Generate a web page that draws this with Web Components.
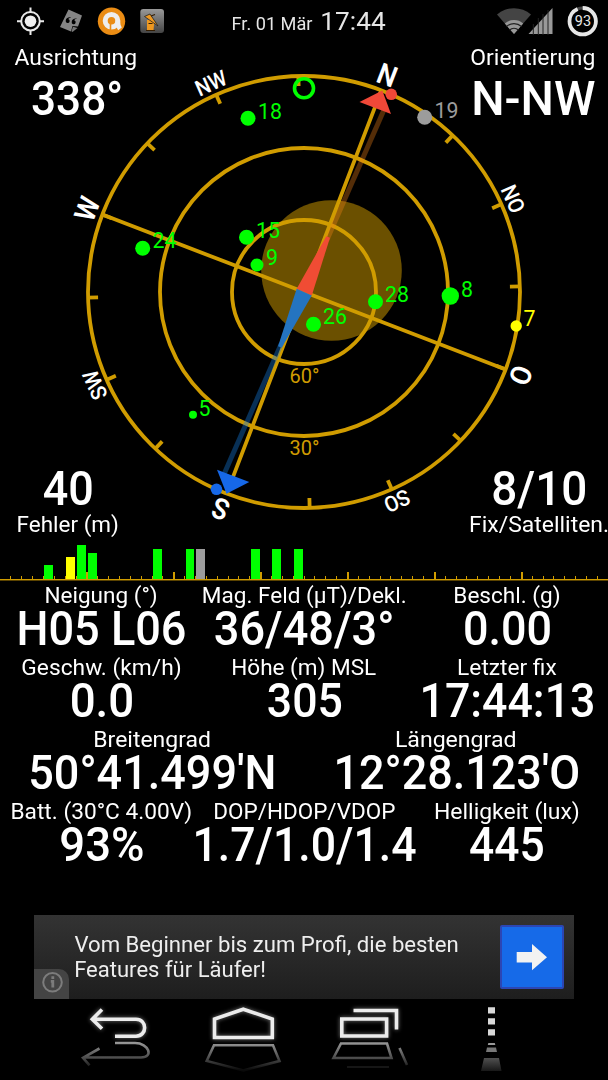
<!DOCTYPE html>
<html lang="de">
<head>
<meta charset="utf-8">
<title>GPS Status</title>
<style>
  body {
    margin: 0;
    background: #000;
    color: #fff;
    font-family: Roboto, "Noto Sans", sans-serif;
    overflow: hidden;
  }
</style>
</head>
<body>
<gps-screen></gps-screen>

<script>
const define = (name, html, setup) => {
  const template = document.createElement('template');
  template.innerHTML = html;
  customElements.define(name, class extends HTMLElement {
    constructor() {
      super();
      this.attachShadow({ mode: 'open' });
      this.shadowRoot.appendChild(template.content.cloneNode(true));
    }
    connectedCallback() {
      if (setup) setup(this, this.shadowRoot);
    }
  });
};

// Text condensed or widened so that its ink is as wide as the width attribute
define('fit-text', `
  <style>
    :host { display: inline-block; white-space: nowrap; }
  </style>
  <slot></slot>
`, (host) => {
  const target = Number(host.getAttribute('width'));
  if (!target) return;
  const style = getComputedStyle(host);
  const ctx = document.createElement('canvas').getContext('2d');
  ctx.font = `${style.fontWeight} ${style.fontSize} Roboto`;
  const box = ctx.measureText(host.textContent);
  const scale = target / (box.actualBoundingBoxRight + box.actualBoundingBoxLeft);
  host.style.transform = `scaleX(${scale})`;
  // keep the layout box in step with the drawn width
  host.style.marginLeft = host.style.marginRight = box.width * (scale - 1) / 2 + 'px';
});

define('status-bar', `
  <style>
    :host { display: flex; align-items: flex-start; height: 42px; color: #e6e6e6; }
    svg { display: block; }
    .clock { display: flex; align-items: baseline; gap: 7px; margin-left: 62px; line-height: 42px; }
    .date { font-size: 17.5px; }
    .time { font-size: 26.5px; }
    .right { margin-left: auto; }
  </style>
  <svg width="170" height="42" viewBox="0 0 170 42">
    <defs>
      <linearGradient id="tile" x2="0" y2="1"><stop stop-color="#999"/><stop offset="1" stop-color="#444"/></linearGradient>
    </defs>
    <g stroke="#e8e8e8" stroke-width="2" fill="none">
      <circle cx="30.5" cy="21.2" r="9.3"/>
      <path d="M30.5 7.5v4.5M30.5 30.5v4.5M17 21.2h4.5M39.5 21.2H44"/>
    </g>
    <circle cx="30.5" cy="21.2" r="5.8" fill="#eee"/>
    <path d="M68.5 9.5 82 15.5 78 26.5l-5.500-.5-1.500 5.500-11-4.500z" fill="#858585"/>
    <path d="m77.500 28-5 4-1-.7 1.500-4.500z" fill="#777"/>
    <path d="M70.700 17.300c-3-.3-5 1.200-5 3.400a2 2 0 1 0 2.600-1.600c.2-.8 1-1.200 2.100-1.200zM76.700 18.500c-3-.3-5 1.200-5 3.400a2 2 0 1 0 2.600-1.600c.2-.8 1-1.200 2.100-1.200z" fill="#000"/>
    <circle cx="111.500" cy="21.200" r="13.700" fill="#ea8c14"/>
    <circle cx="111.500" cy="20.800" r="6.300" fill="none" stroke="#eee" stroke-width="5"/>
    <path d="M117.800 20.500c0 4 .4 6 2.200 8.300" stroke="#eee" stroke-width="4.600" fill="none"/>
    <path d="M110.500 30v-6" stroke="#ea8c14" stroke-width="1.600"/>
    <rect x="140.300" y="9" width="23.700" height="24" rx="3" fill="url(#tile)"/>
    <path d="M147 20h7.500l-1 10h-6.500z" fill="#ee9820"/>
    <path d="M144.500 16.500 150 14l8 12z" fill="#ee9820" stroke="#222" stroke-width=".8"/>
    <path d="M146 30.500h9M148.500 23.500h4M151 16l4-1.500" stroke="#331c00" stroke-width="1.200"/>
  </svg>
  <div class="clock">
    <fit-text class="date" width="80">Fr. 01 Mär</fit-text>
    <fit-text class="time" width="63.500">17:44</fit-text>
  </div>
  <svg class="right" width="120" height="42" viewBox="488 0 120 42">
    <path d="M514 34 497 14.500a26 26 0 0 1 34 0z" fill="#444"/>
    <path d="M514 34 504.800 23.500a14 14 0 0 1 18.400 0z" fill="#999"/>
    <path d="M506.500 26.500a11 11 0 0 1 15 0M509.500 30a7 7 0 0 1 9 0" stroke="#222" stroke-width="1.200" fill="none"/>
    <path d="M528.500 34 552.500 8v26z" fill="#999"/>
    <path d="M533.300 24v11M538.300 18v17M543 14v21M548 10v25" stroke="#222" stroke-width="1"/>
    <circle cx="582.700" cy="21.200" r="13.200" fill="none" stroke="#444" stroke-width="3"/>
    <circle cx="582.700" cy="21.200" r="13.200" fill="none" stroke="#e6e6e6" stroke-width="3.800" stroke-dasharray="77.200 83" transform="rotate(-90 582.700 21.200)"/>
    <text x="582.900" y="26" font-size="14.500" fill="#e6e6e6" text-anchor="middle">93</text>
  </svg>
`);

// One reading: a small caption and a large value, "flip" puts the value first
define('data-reading', `
  <style>
    :host { display: flex; flex-direction: column; align-items: center; }
    :host([flip]) { flex-direction: column-reverse; }
    .caption { font-size: 22.3px; line-height: 22px; }
    .value { font-size: 48px; line-height: 44px; font-weight: 500; padding: 1px 0 0 1px; }
    :host([loose]) .value { margin-top: 8.4px; }
    :host([flip]) .value { margin-bottom: 6px; line-height: 36px; }
  </style>
  <fit-text class="caption"></fit-text>
  <fit-text class="value"></fit-text>
`, (host, root) => {
  for (const part of ['caption', 'value']) {
    const old = root.querySelector('.' + part);
    const [text, width] = host.getAttribute(part).split('|');
    const el = old.cloneNode();
    el.textContent = text;
    if (width) el.setAttribute('width', width);
    old.replaceWith(el);
  }
});

const CX = 304, CY = 292;
const GOLD = '#d09c00';
const GREEN = '#00ff00';

// prn, x, y, dot radius, label x, label baseline, colour
const SATELLITES = [
  [18, 248, 118.300, 7.500, 258, 119, GREEN],
  [15, 246.500, 237.300, 7.500, 256, 237.500, GREEN],
  [24, 142.700, 248.300, 7.500, 152.500, 248.300, GREEN],
  [9, 257, 265, 6.500, 266, 265, GREEN],
  [26, 313.500, 324.300, 7.500, 323, 324, GREEN],
  [28, 375.500, 301.700, 7.500, 385, 301.700, GREEN],
  [8, 450.300, 296, 8.700, 461, 296.500, GREEN],
  [7, 516.200, 326, 5.700, 523.500, 325.700, '#ffff00'],
  [5, 193, 414.700, 4, 198.500, 415.500, GREEN],
  [19, 424.700, 117.300, 7.500, 434.500, 117.800, '#9c9c9c'],
];

define('sky-compass', `
  <style>
    :host { display: block; }
    svg { display: block; }
  </style>
  <svg width="608" height="490" viewBox="0 42 608 490"></svg>
`, (host, root) => {
  const heading = 21;
  const magnetic = 23.7;
  let s = `<circle cx="331.500" cy="270.500" r="70.300" fill="#6b5000"/>`;
  for (const r of [72, 144, 216]) {
    s += `<circle cx="${CX}" cy="${CY}" r="${r}" fill="none" stroke="${GOLD}" stroke-width="3.800"/>`;
  }
  for (let i = 0; i < 16; i++) {
    s += `<path d="M${CX} 75v11" stroke="${GOLD}" stroke-width="3.800" transform="rotate(${heading + i * 22.5} ${CX} ${CY})"/>`;
  }
  s += `<path d="M${CX} 76v432M88 ${CY}h432" stroke="${GOLD}" stroke-width="3.800" transform="rotate(${heading} ${CX} ${CY})"/>`;
  ['N', 'NO', 'O', 'SO', 'S', 'SW', 'W', 'NW'].forEach((name, i) => {
    const minor = i % 2;
    // condensed to match the narrow lettering of the readings
    s += `<text fill="#fff" font-size="${minor ? 22 : 29}" font-weight="${minor ? 500 : 600}" text-anchor="middle" transform="rotate(${heading + i * 45} ${CX} ${CY}) translate(${CX} ${minor ? 71 : 70}) scale(.92 1)">${name}</text>`;
  });
  // Magnetic needle
  s += `<g transform="rotate(${magnetic} ${CX} ${CY})">
    <path d="M301.500 94h5v142h-5z" fill="#f08018" fill-opacity=".35"/>
    <path d="M301.500 348h5v142h-5z" fill="#1478d8" fill-opacity=".4"/>
    <path d="M296 292h16.500l-6.500 -60h-4z" fill="#f04c34"/>
    <path d="M296 292h16.500l-6.500 60h-4z" fill="#2474c0"/>
  </g>`;
  s += `<circle cx="391.200" cy="94.300" r="5.800" fill="#f04838"/>
    <path d="M359.500 102 382.300 90.500 391 114z" fill="#f04838"/>
    <circle cx="216.500" cy="489.300" r="5.800" fill="#1668e8"/>
    <path d="M217 469.700 249.300 482 226.500 493.700z" fill="#1668e8"/>
    <g fill="${GOLD}" font-size="20" text-anchor="middle"><text x="304.500" y="383">60°</text><text x="304.500" y="455">30°</text></g>
    <circle cx="304" cy="88.200" r="9.500" fill="none" stroke="${GREEN}" stroke-width="3.600"/>`;
  for (const [prn, x, y, r, tx, ty, colour] of SATELLITES) {
    s += `<circle cx="${x}" cy="${y}" r="${r}" fill="${colour}"/>
      <text x="${tx}" y="${ty}" font-size="21.300" fill="${colour}">${prn}</text>`;
  }
  root.querySelector('svg').innerHTML = s;
});

// left edge, width, top, colour
const BARS = [
  [44, 9, 564.500, GREEN], [66, 9, 557, '#ffff00'], [77, 9, 545, GREEN], [88, 9, 552.700, GREEN],
  [153, 9, 549, GREEN], [186, 8.300, 549, GREEN], [196, 9, 549, '#9c9c9c'],
  [251, 9, 549, GREEN], [272, 9, 549, GREEN], [294, 9, 549, GREEN],
];

define('signal-strip', `
  <style>
    :host { display: block; }
    svg { display: block; }
  </style>
  <svg width="608" height="41" viewBox="0 540 608 41" shape-rendering="crispEdges"></svg>
`, (host, root) => {
  let s = '';
  for (let i = 1; i < 56; i++) {
    const major = i % 8 === 0;
    const h = major ? 7 : 3;
    s += `<rect x="${Math.floor(i * 10.86)}" y="${579 - h}" width="${major ? 2 : 1}" height="${h}" fill="#d09c00"/>`;
  }
  s += '<rect y="579" width="608" height="1" fill="#d09c00"/><rect y="580" width="608" height="1" fill="#5c4400"/>';
  for (const [x, w, y, colour] of BARS) {
    s += `<rect x="${x}" y="${y}" width="${w}" height="${579 - y}" fill="${colour}"/>`;
  }
  root.querySelector('svg').innerHTML = s;
});

define('ad-banner', `
  <style>
    :host {
      display: flex;
      align-items: center;
      position: relative;
      box-sizing: border-box;
      width: 540px;
      height: 84px;
      padding: 0 10px 0 40px;
      background: linear-gradient(#333, #1e1e1e);
      color: #eee;
    }
    .text { display: flex; flex-direction: column; align-items: flex-start; font-size: 22.3px; line-height: 25.3px; flex: 1; }
    .go {
      display: block;
      box-sizing: border-box;
      width: 64px;
      height: 64px;
      border: 2px solid #2c46b4;
      border-radius: 2px;
      background: #166ae8;
    }
    .info { position: absolute; left: 0; bottom: 0; display: block; }
  </style>
  <div class="text"><slot></slot></div>
  <svg class="go" viewBox="502 927 60 60"><path d="M516.700 952h15.300v-8l15 13.300-15 13v-7.700h-15.300z" fill="#f2f2f2"/></svg>
  <svg class="info" width="35" height="30" viewBox="0 0 35 30">
    <path d="M0 0h25a10 10 0 0 1 10 10v20H0z" fill="#444"/>
    <circle cx="18.500" cy="13.300" r="9.300" fill="none" stroke="#7c7c7c" stroke-width="2"/>
    <path d="M18.800 7.200v2.800M16.800 12.300h2v6.200" stroke="#7c7c7c" stroke-width="2.800" fill="none"/>
  </svg>
`);

// Soft keys with their mirror image fading out below
define('nav-bar', `
  <style>
    :host { display: flex; gap: 36px; padding-left: 74px; }
    svg { display: block; }
    .key { fill: none; stroke: #ececec; stroke-width: 3.6; filter: drop-shadow(0 0 2px #777); }
    .mirror { fill: none; stroke: url(#fade); stroke-width: 2.600; }
  </style>
  <svg width="90" height="80" viewBox="74 1000 90 80">
    <defs>
      <linearGradient id="fade" gradientUnits="userSpaceOnUse" x1="0" x2="0" y1="1042" y2="1070">
        <stop stop-color="#999"/><stop offset=".6" stop-color="#484848"/><stop offset="1" stop-color="#0a0a0a"/>
      </linearGradient>
    </defs>
    <path class="key" d="M102 1009.500 92.300 1019.200l9.700 9.500M92.500 1019.200H136c11.500 0 11.500 17 0 17H115"/>
    <path class="mirror" d="M115 1043h20c14 0 19 14.500 6 14.500H83M99.500 1048.500 83 1057.800l6.500 7.500"/>
  </svg>
  <svg width="90" height="80" viewBox="200 1000 90 80">
    <path class="key" d="M243.300 1009.200 272.300 1019v18.500h-57.800V1019z"/>
    <path class="mirror" d="M214 1045.200h59l6.500 15.800-36.200 9.500-36.600-9.500z"/>
  </svg>
  <svg width="90" height="80" viewBox="326 1000 90 80">
    <path class="key" d="M341.800 1019h44.800v17h-44.800zM353.500 1010.500H396.500v19"/>
    <path class="mirror" d="M341 1043.500h46l4.500 14.500h-58zM399.500 1048l7.500 17"/>
    <path d="M347 1067h42" stroke="#161616" stroke-width="2"/>
  </svg>
  <svg width="90" height="80" viewBox="452 1000 90 80">
    <path d="M488 1007.200h7v6.300h-7zM488 1018.200h7v6.300h-7zM488 1029.300h7v6.300h-7z" fill="#d8d8d8"/>
    <path d="M488.300 1043h6.500l.5 2h-7.500z" fill="#999"/>
    <path d="M487 1047.500h9l1 4.500h-11z" fill="#777"/>
    <path d="M484 1058h15l2.500 13h-20.500z" fill="url(#block)"/>
    <defs><linearGradient id="block" x2="0" y2="1"><stop stop-color="#505050"/><stop offset="1" stop-color="#181818"/></linearGradient></defs>
  </svg>
`);

define('gps-screen', `
  <style>
    :host { display: flex; flex-direction: column; width: 608px; height: 1080px; background: #000; overflow: hidden; }
    .sky { display: grid; height: 498px; grid-template: 1fr / 1fr; }
    .sky > * { grid-area: 1 / 1; }
    .nw { place-self: start; margin: 4px 0 0 15px; }
    .ne { place-self: start end; margin: 4px 13px 0 0; }
    .sw { place-self: end start; margin: 0 0 4.700px 17px; }
    .se { place-self: end start; margin: 0 0 4.700px 469px; }
    .rows { display: flex; flex-direction: column; margin-top: 3px; height: 331px; }
    .row { display: flex; height: 72.1px; }
    .row > * { flex: 1 1 0; min-width: 0; }
    ad-banner { margin-left: 34px; }
    nav-bar { margin-top: 1px; }
  </style>
  <status-bar></status-bar>
  <div class="sky">
    <sky-compass></sky-compass>
    <data-reading class="nw" loose caption="Ausrichtung|121" value="338°|89"></data-reading>
    <data-reading class="ne" loose caption="Orientierung|122.500" value="N-NW|121"></data-reading>
    <data-reading class="sw" flip caption="Fehler (m)|100.500" value="40|48"></data-reading>
    <data-reading class="se" flip caption="Fix/Satelliten.|138" value="8/10|92"></data-reading>
  </div>
  <signal-strip></signal-strip>
  <div class="rows">
    <div class="row">
      <data-reading caption="Neigung (°)|111.500" value="H05 L06|166"></data-reading>
      <data-reading caption="Mag. Feld (µT)/Dekl.|203" value="36/48/3°|177.500"></data-reading>
      <data-reading caption="Beschl. (g)|105.500" value="0.00|85"></data-reading>
    </div>
    <div class="row">
      <data-reading caption="Geschw. (km/h)|158.500" value="0.0|60.500"></data-reading>
      <data-reading caption="Höhe (m) MSL|144" value="305|74"></data-reading>
      <data-reading caption="Letzter fix|98.500" value="17:44:13|171"></data-reading>
    </div>
    <div class="row">
      <data-reading caption="Breitengrad|115" value="50°41.499'N|243.500"></data-reading>
      <data-reading caption="Längengrad|119" value="12°28.123'O|242"></data-reading>
    </div>
    <div class="row">
      <data-reading caption="Batt. (30°C 4.00V)|180" value="93%|82"></data-reading>
      <data-reading caption="DOP/HDOP/VDOP|181" value="1.7/1.0/1.4|221"></data-reading>
      <data-reading caption="Helligkeit (lux)|144" value="445|73.500"></data-reading>
    </div>
  </div>
  <ad-banner>
    <fit-text width="383">Vom Beginner bis zum Profi, die besten</fit-text>
    <fit-text width="190">Features für Läufer!</fit-text>
  </ad-banner>
  <nav-bar></nav-bar>
`);
</script>
</body>
</html>
